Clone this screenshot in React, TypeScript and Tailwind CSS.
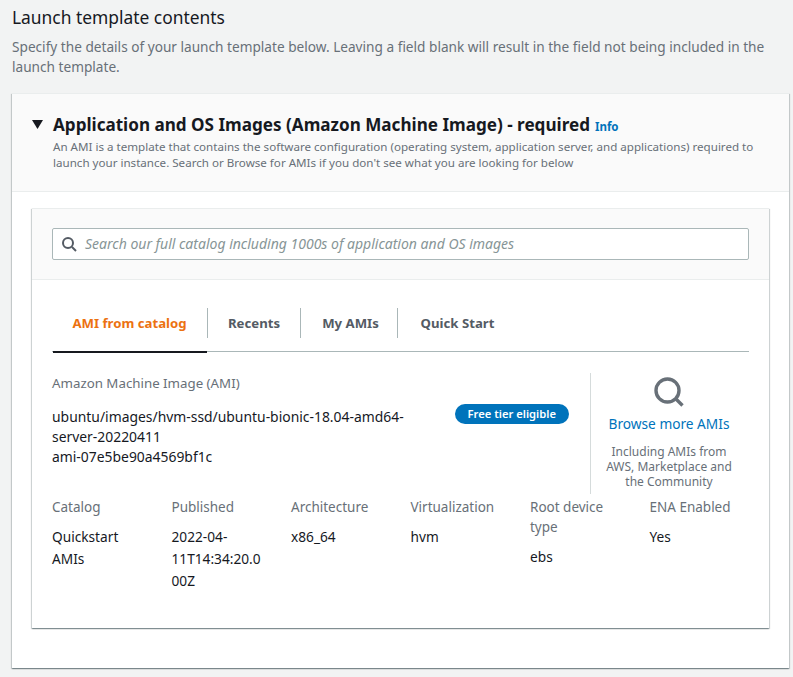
const font = "font-['Noto_Sans','Open_Sans',sans-serif]"

const meta = [
  { label: "Catalog", value: "Quickstart AMIs" },
  { label: "Published", value: "2022-04-11T14:34:20.000Z" },
  { label: "Architecture", value: "x86_64" },
  { label: "Virtualization", value: "hvm" },
  { label: "Root device type", value: "ebs" },
  { label: "ENA Enabled", value: "Yes" },
]

function MetaColumns() {
  return (
    <div className="mt-[3px] grid grid-cols-6 gap-x-[20px]">
      {meta.map((m) => (
        <div key={m.label} className="min-w-0">
          <div className="text-[13.5px] leading-[20px] text-[#687078]">{m.label}</div>
          <div className="mt-[9px] pr-[5px] text-[13.7px] leading-[22px] text-[#16191f] [overflow-wrap:anywhere]">
            {m.value}
          </div>
        </div>
      ))}
    </div>
  )
}

export default function App() {
  return (
    <div className={`${font} h-[677px] w-[793px] overflow-hidden bg-[#f2f3f3] pl-[12px] pr-[4px] pt-[7px]`}>
      <h2 className="text-[17.4px] font-normal leading-[20px] text-[#16191f]">Launch template contents</h2>
      <p className="mt-[10px] text-[13.65px] leading-[20px] text-[#687078]">
        Specify the details of your launch template below. Leaving a field blank will result in the field not being included in the launch template.
      </p>

      <section className="mt-[16px] h-[575px] border-t border-t-[#eaeded] bg-white shadow-[0_1px_1px_0_rgba(0,28,36,0.3),1px_1px_1px_0_rgba(0,28,36,0.15),-1px_1px_1px_0_rgba(0,28,36,0.15)]">
        <header className="h-[98px] border-b border-[#eaeded] bg-[#fafafa] pl-[20px] pr-[20px] pt-[19px]">
          <div className="flex items-center">
            <svg width="11" height="9" viewBox="0 0 11 9" className="mr-[10px] mt-[-1px] shrink-0">
              <path d="M0 0h11L5.5 9z" fill="#16191f" />
            </svg>
            <h3 className="text-[17.1px] font-bold leading-[24px] text-[#16191f]">
              Application and OS Images (Amazon Machine Image) - required
            </h3>
            <a className="ml-[5px] mt-[3px] text-[11.5px] font-bold leading-[16px] text-[#0073bb]">Info</a>
          </div>
          <p className="ml-[21px] mt-[2px] text-[11.6px] leading-[16px] text-[#687078]">
            An AMI is a template that contains the software configuration (operating system, application server, and applications) required to launch your instance. Search or Browse for AMIs if you don't see what you are looking for below
          </p>
        </header>

        <div className="px-[20px] pt-[16px]">
          <div className="h-[420px] border-t border-t-[#eaeded] bg-white shadow-[0_1px_1px_0_rgba(0,28,36,0.3),1px_1px_1px_0_rgba(0,28,36,0.15),-1px_1px_1px_0_rgba(0,28,36,0.15)]">
            <div className="h-[71px] border-b border-[#eaeded] bg-[#fafafa] px-[20px] pt-[19px]">
              <div className="flex h-[32px] items-center rounded-[2px] border border-[#aab7b8] bg-white pl-[8px]">
                <svg width="16" height="16" viewBox="0 0 16 16" fill="none" stroke="#545b64" strokeWidth="2" className="shrink-0">
                  <circle cx="7" cy="7" r="5" />
                  <path d="M11 11l4 4" />
                </svg>
                <span className="ml-[8px] pb-[2px] text-[14px] italic text-[#879596]">
                  Search our full catalog including 1000s of application and OS images
                </span>
              </div>
            </div>

            <div className="px-[20px]">
              <div className="flex h-[72px] items-start border-b border-[#aab7b8] pt-[28px] text-[13.2px] font-bold leading-[30px] text-[#545b64]">
                <button className="relative h-[44px] w-[155px] pb-[14px] font-bold text-[#ec7211]">
                  AMI from catalog
                  <span className="absolute bottom-[-1px] left-[1px] right-0 h-[2px] bg-[#16191f]" />
                </button>
                <button className="h-[30px] w-[93px] border-l border-[#aab7b8] font-bold">Recents</button>
                <button className="h-[30px] w-[97px] border-l border-[#aab7b8] pl-[3px] font-bold">My AMIs</button>
                <button className="h-[30px] w-[120px] border-l border-[#aab7b8] font-bold">Quick Start</button>
              </div>

              <div className="mt-[21px] flex">
                <div className="flex-1">
                  <div className="text-[13.3px] leading-[20px] text-[#687078]">Amazon Machine Image (AMI)</div>
                  <div className="mt-[14px] flex items-start justify-between pr-[21px]">
                    <div className="w-[380px] text-[13.9px] leading-[20px] text-[#16191f]">
                      <div>ubuntu/images/hvm-ssd/ubuntu-bionic-18.04-amd64-server-20220411</div>
                      <div>ami-07e5be90a4569bf1c</div>
                    </div>
                    <span className="mt-[-3px] rounded-full bg-[#0073bb] px-[13px] text-[11.2px] font-semibold leading-[20px] text-white">Free tier eligible</span>
                  </div>
                </div>
                <div className="h-[121px] w-[159px] border-l border-[#d5dbdb] pr-[2px] text-center">
                  <svg width="30" height="30" viewBox="0 0 30 30" fill="none" stroke="#687078" strokeWidth="3.4" className="mx-auto mt-[4px]">
                    <circle cx="13.5" cy="13.5" r="11.5" />
                    <path d="M21.5 21.5l7 7" />
                  </svg>
                  <div className="mt-[7px] text-[13.7px] leading-[20px] text-[#0073bb]">Browse more AMIs</div>
                  <div className="mx-auto mt-[10px] w-[130px] text-[12px] leading-[15px] text-[#687078]">Including AMIs from AWS, Marketplace and the Community</div>
                </div>
              </div>

              <MetaColumns />
            </div>
          </div>
        </div>
      </section>
    </div>
  )
}
